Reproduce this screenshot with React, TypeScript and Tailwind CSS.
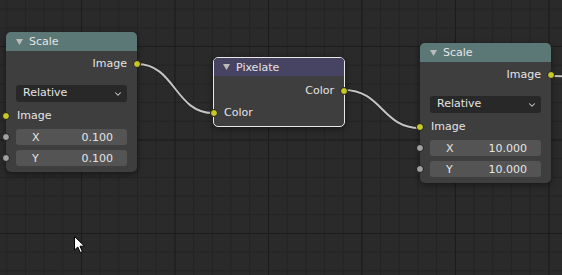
import { ChevronDown } from "lucide-react";

const FONT = "font-['DejaVu_Sans','Liberation_Sans',sans-serif]";

type SocketKind = "image" | "value";

function Socket({ side, kind }: { side: "left" | "right"; kind: SocketKind }) {
  const pos = side === "left" ? "-left-[4px]" : "-right-[4px]";
  const fill = kind === "image" ? "bg-[#c7c729]" : "bg-[#a1a1a1]";
  return (
    <span
      className={`absolute top-1/2 h-[8px] w-[8px] -translate-y-1/2 rounded-full border border-[#1c1c1c] ${pos} ${fill}`}
    />
  );
}

function Collapse() {
  return (
    <svg width="7" height="6" viewBox="0 0 7 6" aria-hidden>
      <polygon points="0,0 7,0 3.5,6" fill="#bcbcbc" />
    </svg>
  );
}

function Field({ label, value }: { label: string; value: string }) {
  return (
    <div className="relative">
      <Socket side="left" kind="value" />
      <div className="mx-[10px] flex h-[16px] items-center justify-between rounded-[3px] bg-[#545454] pl-[16px] pr-[14px] text-[11px] leading-none text-[#e4e4e4]">
        <span>{label}</span>
        <span>{value}</span>
      </div>
    </div>
  );
}

function ScaleNode({ x, y, className }: { x: string; y: string; className: string }) {
  return (
    <div className={`absolute w-[131px] rounded-[5px] bg-[#3e3e3e] shadow-[0_2px_6px_rgba(0,0,0,0.45)] ${className}`}>
      <div className="flex h-[19px] items-center gap-[6px] rounded-t-[5px] bg-[#5b7877] pl-[10px]">
        <Collapse />
        <span className="text-[11px] leading-none text-[#e4e4e4]">Scale</span>
      </div>
      <div className="flex flex-col pb-[6px] pt-[4px]">
        <div className="relative flex h-[18px] items-center justify-end pr-[10px] text-[11px] text-[#e4e4e4]">
          Image
          <Socket side="right" kind="image" />
        </div>
        <div className="mx-[10px] mt-[12px] flex h-[17px] items-center justify-between rounded-[3px] bg-[#282828] pl-[7px] pr-[4px] text-[11px] text-[#e4e4e4]">
          <span>Relative</span>
          <ChevronDown size={10} strokeWidth={2.5} className="text-[#cfcfcf]" />
        </div>
        <div className="relative mt-[5px] flex h-[18px] items-center pl-[11px] text-[11px] text-[#e4e4e4]">
          <Socket side="left" kind="image" />
          Image
        </div>
        <div className="mt-[4px] flex flex-col gap-[5px]">
          <Field label="X" value={x} />
          <Field label="Y" value={y} />
        </div>
      </div>
    </div>
  );
}

function PixelateNode() {
  return (
    <div className="absolute left-[213px] top-[57px] w-[132px] rounded-[5px] border border-[#e8e8e8] bg-[#3e3e3e] shadow-[0_2px_6px_rgba(0,0,0,0.45)]">
      <div className="flex h-[18px] items-center gap-[6px] rounded-t-[4px] bg-[#474363] pl-[9px]">
        <Collapse />
        <span className="text-[11px] leading-none text-[#e4e4e4]">Pixelate</span>
      </div>
      <div className="flex flex-col pb-[4px] pt-[6px]">
        <div className="relative flex h-[18px] items-center justify-end pr-[10px] text-[11px] text-[#e4e4e4]">
          Color
          <Socket side="right" kind="image" />
        </div>
        <div className="relative mt-[4px] flex h-[18px] items-center pl-[10px] text-[11px] text-[#e4e4e4]">
          <Socket side="left" kind="image" />
          Color
        </div>
      </div>
    </div>
  );
}

function wire(x1: number, y1: number, x2: number, y2: number) {
  const d = Math.abs(x2 - x1) * 0.5;
  return `M${x1},${y1} C${x1 + d},${y1} ${x2 - d},${y2} ${x2},${y2}`;
}

const links = [wire(137, 64, 213, 113), wire(344, 90, 420, 128), wire(552, 76, 600, 78)];

export default function App() {
  return (
    <div
      className={`relative h-[275px] w-[562px] overflow-hidden bg-[#2a2a2a] bg-[image:linear-gradient(to_right,#1c1c1c_1px,transparent_1px),linear-gradient(to_bottom,#1c1c1c_1px,transparent_1px),linear-gradient(to_right,#232323_1px,transparent_1px),linear-gradient(to_bottom,#232323_1px,transparent_1px)] bg-[size:93.5px_93.5px,93.5px_93.5px,18.7px_18.7px,18.7px_18.7px] bg-[position:81px_46px] ${FONT}`}
    >
      {/* node links, drawn under the nodes */}
      <svg className="absolute inset-0" width="562" height="275" aria-hidden>
        {links.map((d) => (
          <g key={d}>
            <path d={d} fill="none" stroke="#1a1a1a" strokeOpacity="0.6" strokeWidth="3.5" />
            <path d={d} fill="none" stroke="#c4c4c4" strokeWidth="2" />
          </g>
        ))}
      </svg>

      <ScaleNode x="0.100" y="0.100" className="left-[6px] top-[32px]" />
      <PixelateNode />
      <ScaleNode x="10.000" y="10.000" className="left-[420px] top-[43px]" />

      {/* mouse cursor */}
      <svg className="absolute left-[74px] top-[236px]" width="12" height="18" viewBox="0 0 12 18" aria-hidden>
        <path d="M0.5,0.5 L0.5,14 L3.8,11 L6.3,16.5 L8.4,15.6 L6,10.2 L10.5,10.2 Z" fill="#ffffff" stroke="#000000" strokeWidth="1" />
      </svg>
    </div>
  );
}
